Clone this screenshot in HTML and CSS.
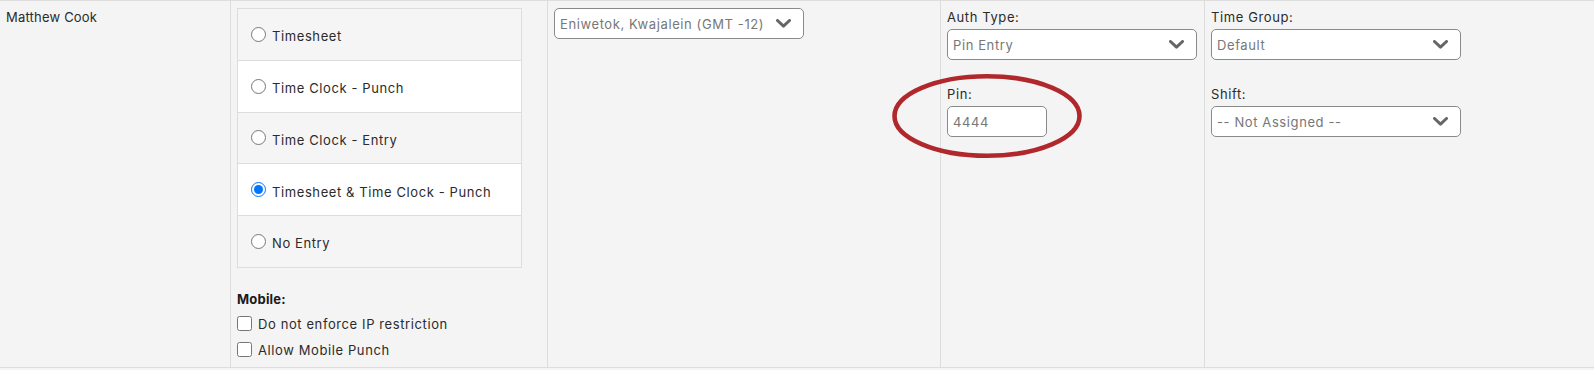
FILE: index.html
```html
<!DOCTYPE html>
<html lang="en">
<head>
<meta charset="utf-8">
<title>Employee row</title>
<link rel="stylesheet" href="styles.css">
</head>
<body>
<div class="row">
  <div class="cell name-cell">Matthew Cook</div>

  <div class="cell entry-cell">
    <div class="entry-list">
      <label class="entry-item"><input type="radio" name="entry"><span>Timesheet</span></label>
      <label class="entry-item"><input type="radio" name="entry"><span>Time Clock - Punch</span></label>
      <label class="entry-item"><input type="radio" name="entry"><span>Time Clock - Entry</span></label>
      <label class="entry-item"><input type="radio" name="entry" checked><span>Timesheet &amp; Time Clock - Punch</span></label>
      <label class="entry-item"><input type="radio" name="entry"><span>No Entry</span></label>
    </div>
    <div class="mobile">
      <div class="mobile-title">Mobile:</div>
      <label class="check"><input type="checkbox"><span>Do not enforce IP restriction</span></label>
      <label class="check"><input type="checkbox"><span>Allow Mobile Punch</span></label>
    </div>
  </div>

  <div class="cell tz-cell">
    <div class="select">
      <select><option>Eniwetok, Kwajalein (GMT -12)</option></select>
      <svg class="chev" width="15" height="9" viewBox="0 0 15 9"><path d="M1.5 1.5 L7.5 7.2 L13.5 1.5" fill="none" stroke="#666" stroke-width="3" stroke-linecap="round" stroke-linejoin="round"/></svg>
    </div>
  </div>

  <div class="cell auth-cell">
    <div class="field">
      <label class="field-label">Auth Type:</label>
      <div class="select">
        <select><option>Pin Entry</option></select>
        <svg class="chev" width="15" height="9" viewBox="0 0 15 9"><path d="M1.5 1.5 L7.5 7.2 L13.5 1.5" fill="none" stroke="#666" stroke-width="3" stroke-linecap="round" stroke-linejoin="round"/></svg>
      </div>
    </div>
    <div class="field">
      <label class="field-label">Pin:</label>
      <input class="pin" type="text" value="4444">
    </div>
  </div>

  <div class="cell group-cell">
    <div class="field">
      <label class="field-label">Time Group:</label>
      <div class="select">
        <select><option>Default</option></select>
        <svg class="chev" width="15" height="9" viewBox="0 0 15 9"><path d="M1.5 1.5 L7.5 7.2 L13.5 1.5" fill="none" stroke="#666" stroke-width="3" stroke-linecap="round" stroke-linejoin="round"/></svg>
      </div>
    </div>
    <div class="field">
      <label class="field-label">Shift:</label>
      <div class="select">
        <select><option>-- Not Assigned --</option></select>
        <svg class="chev" width="15" height="9" viewBox="0 0 15 9"><path d="M1.5 1.5 L7.5 7.2 L13.5 1.5" fill="none" stroke="#666" stroke-width="3" stroke-linecap="round" stroke-linejoin="round"/></svg>
      </div>
    </div>
  </div>

  <svg class="highlight" width="200" height="92" viewBox="0 0 200 92">
    <ellipse cx="97" cy="45" rx="92.5" ry="39.8" fill="none" stroke="#b1282c" stroke-width="4.6"/>
  </svg>
</div>
</body>
</html>
```

FILE: styles.css
```css
* { box-sizing: border-box; }

html, body {
  margin: 0;
  padding: 0;
  background: #f4f4f4;
}

body {
  font-family: "Inter", "Open Sans", sans-serif;
  font-size: 13px;
  line-height: 18px;
  letter-spacing: 0.6px;
  color: #2b2b2b;
}

.row {
  position: relative;
  display: grid;
  grid-template-columns: 231px 317px 393px 264px 1fr;
  border-top: 1px solid #dddddd;
  border-bottom: 1px solid #dddddd;
  background: #f4f4f4;
}

.cell {
  padding: 7px 6px 0;
  border-right: 1px solid #dddddd;
}

.name-cell {
  letter-spacing: 0.2px;
}

.group-cell {
  border-right: none;
}

/* entry radios */
.entry-list {
  width: 285px;
  display: flex;
  flex-direction: column;
}

.entry-item {
  display: flex;
  align-items: center;
  height: 52.75px;
  margin-top: -1px;
  padding-left: 13px;
  border: 1px solid #dddddd;
  background: #f5f5f5;
}

.entry-item:first-child {
  margin-top: 0;
}

.entry-item:nth-child(even) {
  background: #ffffff;
}

.entry-item input {
  width: 15px;
  height: 15px;
  margin: 0 6px 0 0;
}

.entry-item span {
  padding-top: 4px;
}

.mobile {
  margin-top: 22px;
}

.mobile-title {
  font-weight: 700;
  letter-spacing: 0.2px;
  margin-bottom: 7px;
  color: #1a1a1a;
}

.check {
  display: flex;
  align-items: flex-start;
  height: 26px;
}

.check input {
  width: 15px;
  height: 15px;
  margin: 1px 6px 0 0;
}

/* selects */
.select {
  position: relative;
  width: 250px;
  height: 31px;
}

.select select {
  -webkit-appearance: none;
  appearance: none;
  width: 100%;
  height: 100%;
  margin: 0;
  padding: 0 30px 0 5px;
  border: 1px solid #8a8a8a;
  border-radius: 5px;
  background: #ffffff;
  color: #777777;
  font: inherit;
  letter-spacing: inherit;
}

.select .chev {
  position: absolute;
  right: 13px;
  top: 11px;
  pointer-events: none;
}

.field-label {
  display: block;
  margin-bottom: 3px;
  color: #2b2b2b;
}

.field + .field {
  margin-top: 25px;
}

.pin {
  width: 100px;
  height: 31px;
  margin: 0;
  padding: 0 5px;
  border: 1px solid #8a8a8a;
  border-radius: 5px;
  background: #ffffff;
  color: #777777;
  font: inherit;
  letter-spacing: inherit;
}

.highlight {
  position: absolute;
  left: 890px;
  top: 70px;
  pointer-events: none;
}
```
